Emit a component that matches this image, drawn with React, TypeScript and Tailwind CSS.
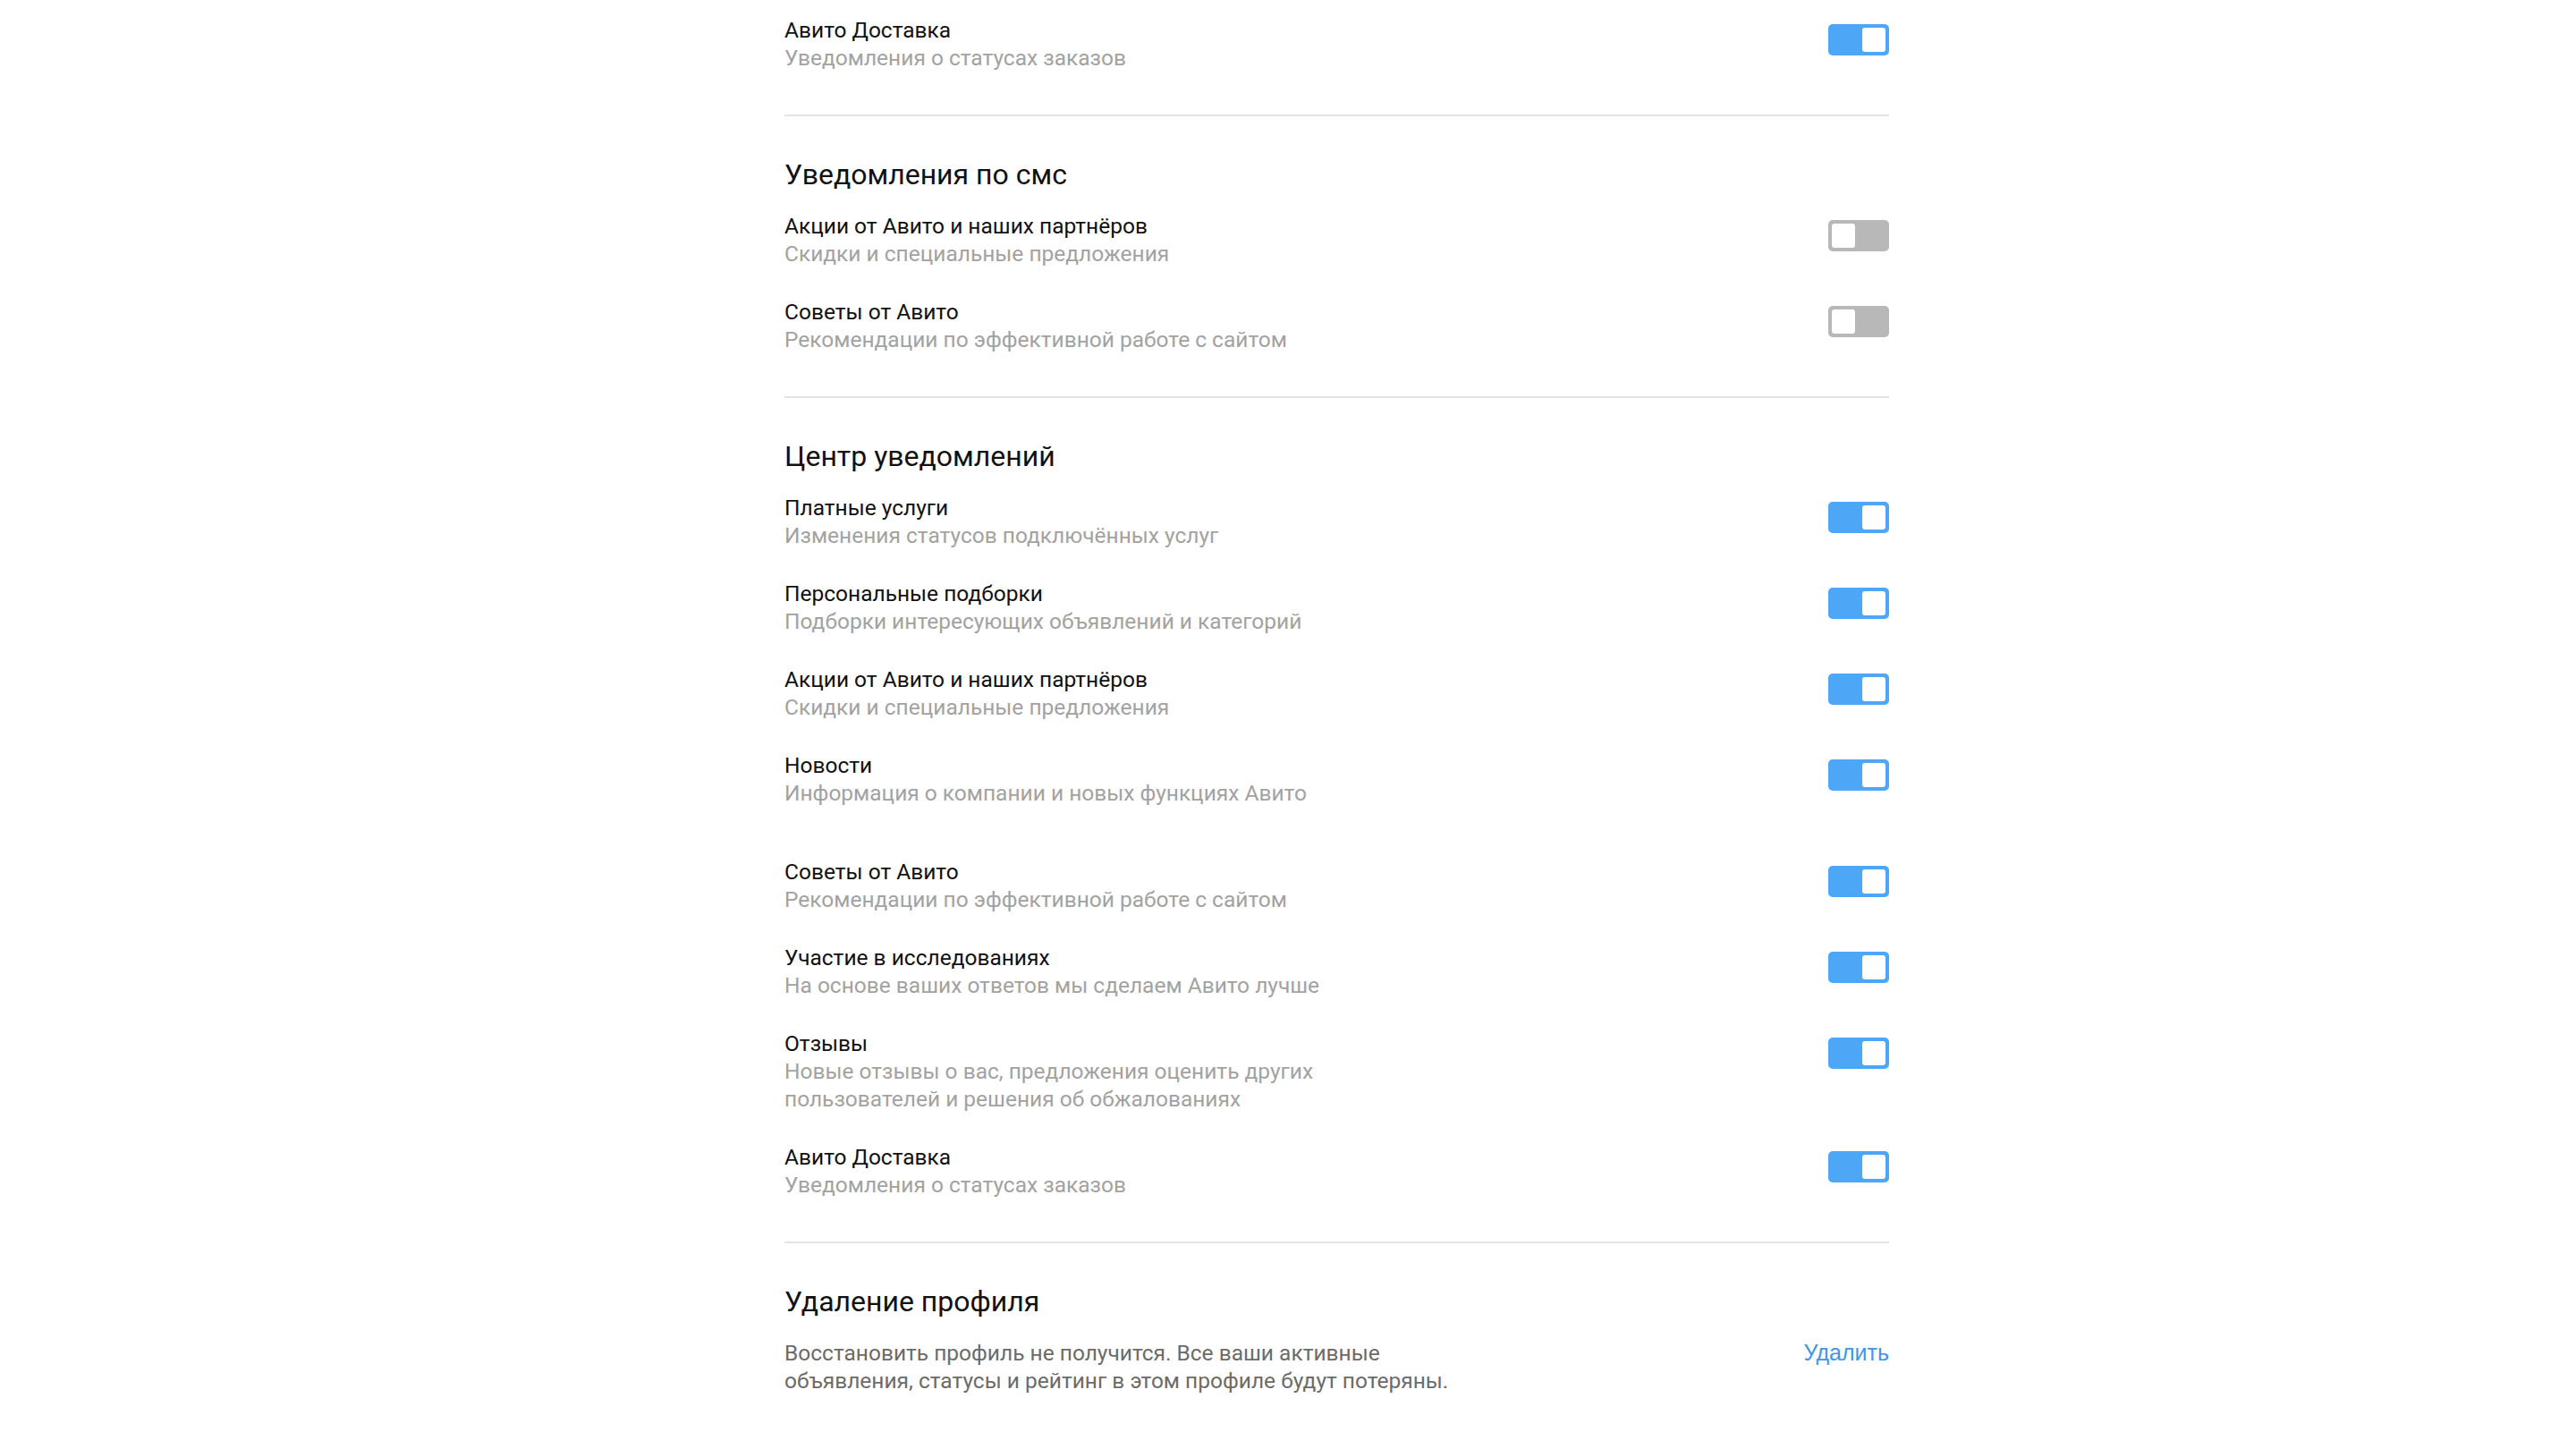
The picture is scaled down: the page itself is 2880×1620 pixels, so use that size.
import { FC } from 'react'

type Item = {
  title: string
  sub: React.ReactNode
  on: boolean
  extraTop?: boolean
}

const Toggle: FC<{ on: boolean }> = ({ on }) => (
  <div
    className={
      on
        ? 'flex h-[35px] w-[68px] shrink-0 justify-end rounded-[5px] bg-[#4da6f6] p-[4px]'
        : 'flex h-[35px] w-[68px] shrink-0 justify-start rounded-[5px] bg-[#b8b8b8] p-[4px]'
    }
  >
    <div className="h-full w-[26px] rounded-[3px] bg-white" />
  </div>
)

const Row: FC<{ item: Item }> = ({ item }) => (
  <div className={item.extraTop ? 'mt-[23px] flex items-start justify-between' : 'flex items-start justify-between'}>
    <div className="text-[24.5px] leading-[31px]">
      <div className="text-[#111111]">{item.title}</div>
      <div className="text-[#a2a2a2]">{item.sub}</div>
    </div>
    <div className="mt-[9px]">
      <Toggle on={item.on} />
    </div>
  </div>
)

const Divider: FC = () => <div className="mt-[48px] h-[2px] bg-[#e4e4e4]" />

const Heading: FC<{ children: React.ReactNode }> = ({ children }) => (
  <h2 className="mt-[45px] mb-[22px] text-[32px] leading-[40px] text-[#111111]">{children}</h2>
)

const sms: Item[] = [
  { title: 'Акции от Авито и наших партнёров', sub: 'Скидки и специальные предложения', on: false },
  { title: 'Советы от Авито', sub: 'Рекомендации по эффективной работе с сайтом', on: false },
]

const center: Item[] = [
  { title: 'Платные услуги', sub: 'Изменения статусов подключённых услуг', on: true },
  { title: 'Персональные подборки', sub: 'Подборки интересующих объявлений и категорий', on: true },
  { title: 'Акции от Авито и наших партнёров', sub: 'Скидки и специальные предложения', on: true },
  { title: 'Новости', sub: 'Информация о компании и новых функциях Авито', on: true },
  { title: 'Советы от Авито', sub: 'Рекомендации по эффективной работе с сайтом', on: true, extraTop: true },
  { title: 'Участие в исследованиях', sub: 'На основе ваших ответов мы сделаем Авито лучше', on: true },
  {
    title: 'Отзывы',
    sub: (
      <>
        Новые отзывы о вас, предложения оценить других
        <br />
        пользователей и решения об обжалованиях
      </>
    ),
    on: true,
  },
  { title: 'Авито Доставка', sub: 'Уведомления о статусах заказов', on: true },
]

const App: FC = () => {
  return (
    <div className="min-h-screen bg-white font-['Roboto',sans-serif]">
      <div className="ml-[877px] w-[1235px] pt-[18px] pb-[60px]">
        {/* Email — tail of previous section */}
        <Row item={{ title: 'Авито Доставка', sub: 'Уведомления о статусах заказов', on: true }} />
        <Divider />

        {/* SMS */}
        <Heading>Уведомления по смс</Heading>
        <div className="flex flex-col gap-[34px]">
          {sms.map((it, i) => (
            <Row key={i} item={it} />
          ))}
        </div>
        <Divider />

        {/* Notification center */}
        <Heading>Центр уведомлений</Heading>
        <div className="flex flex-col gap-[34px]">
          {center.map((it, i) => (
            <Row key={i} item={it} />
          ))}
        </div>
        <Divider />

        {/* Delete profile */}
        <Heading>Удаление профиля</Heading>
        <div className="flex items-start justify-between">
          <p className="text-[24.5px] leading-[31px] text-[#6b6b6b]">
            Восстановить профиль не получится. Все ваши активные
            <br />
            объявления, статусы и рейтинг в этом профиле будут потеряны.
          </p>
          <a className="font-['Liberation_Sans',sans-serif] text-[25px] leading-[31px] text-[#3f96e6]">
            Удалить
          </a>
        </div>
      </div>
    </div>
  )
}

export default App
